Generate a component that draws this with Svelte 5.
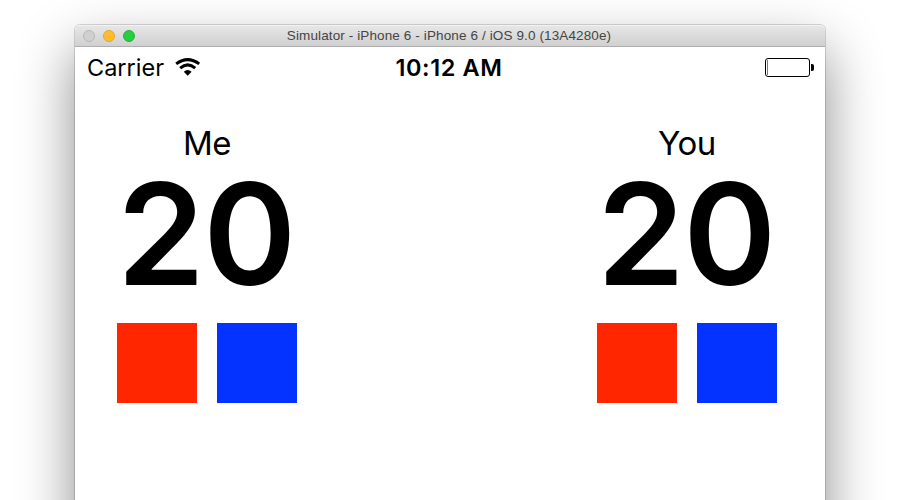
<script>
  const players = ['Me', 'You'];
  let scores = $state([20, 20]);
</script>

<div class="desktop">
  <div class="window">
    <header class="titlebar">
      <div class="lights"><i class="off"></i><i class="min"></i><i class="max"></i></div>
      <span class="title">Simulator - iPhone 6 - iPhone 6 / iOS 9.0 (13A4280e)</span>
    </header>
    <div class="status">
      <div class="left">
        <span class="carrier">Carrier</span>
        <svg class="wifi" width="26" height="20" viewBox="0 0 26 20">
          <g fill="none" stroke="#000" stroke-width="3">
            <path d="M1.2 5.9Q12.7 -2.7 24.2 5.9" />
            <path d="M5.2 10.2Q12.7 3.6 20.2 10.2" />
          </g>
          <path d="M8.8 13.7Q12.7 10.1 16.6 13.7L12.7 17.8Z" />
        </svg>
      </div>
      <span class="time">10:12 AM</span>
      <svg class="battery" width="50" height="20" viewBox="0 0 50 20">
        <rect x=".5" y=".5" width="44" height="18" rx="2.5" fill="none" stroke="#000" />
        <path d="M2.5 2V17" stroke="#f04a38" />
        <path d="M46 6h1a2 2 0 0 1 2 2v3a2 2 0 0 1-2 2h-1z" />
      </svg>
    </div>
    <main>
      {#each players as name, i}
        <section>
          <div class="name">{name}</div>
          <div class="score">{scores[i]}</div>
          <div class="buttons">
            <button class="red" aria-label="Decrease" onclick={() => scores[i]--}></button>
            <button class="blue" aria-label="Increase" onclick={() => scores[i]++}></button>
          </div>
        </section>
      {/each}
    </main>
  </div>
</div>

<style>
  .desktop {
    box-sizing: border-box;
    width: 900px;
    height: 500px;
    padding: 25px 75px 0;
    overflow: hidden;
    background: #fff;
    color: #000;
    font-family: Inter, sans-serif;
  }
  .window {
    width: 750px;
    height: 620px;
    border-radius: 5px 5px 0 0;
    background: #fff;
    box-shadow: 0 0 0 1px rgba(0, 0, 0, 0.15), 0 25px 55px rgba(0, 0, 0, 0.46);
  }
  .titlebar {
    box-sizing: border-box;
    height: 22px;
    display: grid;
    grid-template-columns: 195px 1fr 195px;
    align-items: center;
    border-top: 1px solid #f2f2f2;
    border-bottom: 1px solid #afafaf;
    border-radius: 5px 5px 0 0;
    background: linear-gradient(#e6e6e6, #d0d0d0);
  }
  .lights {
    display: flex;
    gap: 8px;
    padding-left: 8px;
  }
  .lights i {
    box-sizing: border-box;
    width: 12px;
    height: 12px;
    border-radius: 50%;
    border: 1px solid var(--rim);
  }
  .off { background: #d0d0d0; --rim: #b8b8b8; }
  .min { background: #ffbd2e; --rim: #e3a532; }
  .max { background: #28cd41; --rim: #24b139; }
  .title {
    padding-right: 2px;
    text-align: center;
    font: 13.5px/20px "Liberation Sans", sans-serif;
    letter-spacing: 0.12px;
    color: #454545;
    white-space: nowrap;
  }
  .status {
    height: 42px;
    display: grid;
    grid-template-columns: 1fr auto 1fr;
    align-items: center;
    padding: 0 12px;
  }
  .left {
    display: flex;
    align-items: center;
    gap: 11px;
  }
  .carrier {
    font-size: 23.5px;
    line-height: 42px;
  }
  .time {
    font-size: 23.5px;
    font-weight: 600;
    line-height: 42px;
    letter-spacing: 0.6px;
    padding-right: 2px;
  }
  .battery {
    justify-self: end;
    display: block;
    margin-right: -2px;
  }
  main {
    display: flex;
    justify-content: space-between;
    padding: 34px 48px 0 42px;
  }
  section {
    width: 180px;
    text-align: center;
  }
  .name {
    font-size: 33px;
    line-height: 40px;
    letter-spacing: -0.4px;
  }
  .score {
    font-size: 141px;
    font-weight: 600;
    line-height: 140px;
    letter-spacing: -1.5px;
    padding: 1px 4px 0 0;
    white-space: nowrap;
  }
  .buttons {
    display: flex;
    gap: 20px;
    padding-top: 19px;
  }
  button {
    width: 80px;
    height: 80px;
    padding: 0;
    border: 0;
  }
  .red { background: #ff2600; }
  .blue { background: #0433ff; }
</style>
